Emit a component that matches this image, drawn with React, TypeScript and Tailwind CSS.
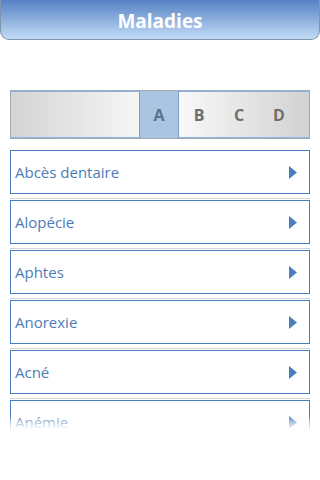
const diseases = ['Abcès dentaire', 'Alopécie', 'Aphtes', 'Anorexie', 'Acné', 'Anémie'];
const letters = ['A', 'B', 'C', 'D'];

function Arrow() {
  return (
    <svg width="8" height="13" viewBox="0 0 8 13" className="shrink-0">
      <path d="M0 0 L8 6.5 L0 13 Z" fill="#4a7fbd" />
    </svg>
  );
}

export default function App() {
  return (
    <div className="h-[480px] w-[320px] overflow-hidden bg-white font-['Open_Sans',sans-serif]">
      {/* titre */}
      <div className="flex h-[40px] items-center justify-center rounded-b-[9px] border-x border-b border-[#7f95ad] bg-[linear-gradient(to_bottom,#5482c3,#c4dcf7)] pt-[4px]">
        <h1 className="text-[19px] font-bold leading-none text-white">Maladies</h1>
      </div>

      {/* alphabet */}
      <div className="mx-[10px] mt-[50px] h-[49px] border border-[#a3aab2] bg-[linear-gradient(to_right,#d4d4d4,#f5f5f5_42%,#f7f7f7_58%,#d2d2d2)]">
        <div className="flex h-full border-y border-[#8cb4e8]">
          <div className="w-[128px]" />
          {letters.map((l, i) => (
            <div
              key={l}
              className={
                i === 0
                  ? '-my-px flex w-[40px] items-center justify-center border-x border-[#7b9ec6] bg-[#a9c5e1] text-[16px] font-bold text-[#5a7190]'
                  : 'flex w-[40px] items-center justify-center text-[16px] font-bold text-[#6e6e6e]'
              }
            >
              {l}
            </div>
          ))}
        </div>
      </div>

      {/* liste */}
      <div className="relative mx-[10px] mt-[11px] h-[281px] overflow-hidden">
        {diseases.map((d) => (
          <div key={d}>
            <div className="flex h-[44px] items-center justify-between border border-[#4a7fbd] pl-[4px] pr-[12px]">
              <span className="text-[15px] text-[#4a7db5]">{d}</span>
              <Arrow />
            </div>
            <div className="mt-[4px] mb-px h-px bg-[#d4d4d4]" />
          </div>
        ))}
        <div className="absolute inset-x-0 bottom-0 h-[16px] bg-[linear-gradient(to_bottom,rgba(255,255,255,0),rgba(255,255,255,0.7)_60%,#fff)]" />
      </div>
    </div>
  );
}
